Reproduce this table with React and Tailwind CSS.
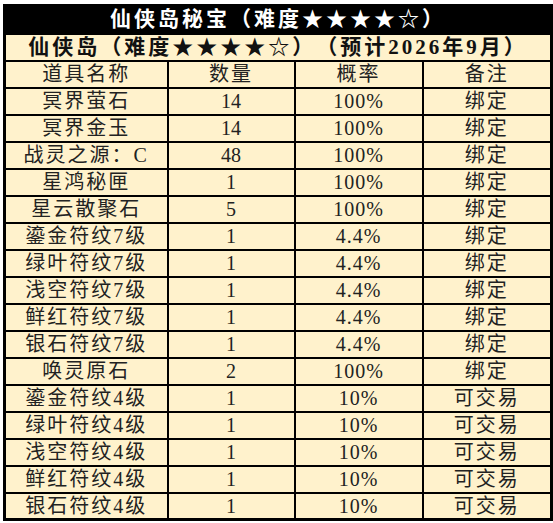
import React from "react";

const rows = [
  ["冥界萤石", "14", "100%", "绑定"],
  ["冥界金玉", "14", "100%", "绑定"],
  ["战灵之源：C", "48", "100%", "绑定"],
  ["星鸿秘匣", "1", "100%", "绑定"],
  ["星云散聚石", "5", "100%", "绑定"],
  ["鎏金符纹7级", "1", "4.4%", "绑定"],
  ["绿叶符纹7级", "1", "4.4%", "绑定"],
  ["浅空符纹7级", "1", "4.4%", "绑定"],
  ["鲜红符纹7级", "1", "4.4%", "绑定"],
  ["银石符纹7级", "1", "4.4%", "绑定"],
  ["唤灵原石", "2", "100%", "绑定"],
  ["鎏金符纹4级", "1", "10%", "可交易"],
  ["绿叶符纹4级", "1", "10%", "可交易"],
  ["浅空符纹4级", "1", "10%", "可交易"],
  ["鲜红符纹4级", "1", "10%", "可交易"],
  ["银石符纹4级", "1", "10%", "可交易"],
];

const font = { fontFamily: '"Liberation Serif", "Noto Sans CJK SC", serif' };

export default function App() {
  return (
    <div className="w-[553px] h-[523px] bg-white pt-[4px] pl-[3px] [text-spacing-trim:space-all]" style={font}>
      <table className="border-collapse border-[3px] border-black bg-[#fff2cc] text-[#222] table-fixed w-[547px]">
        <colgroup>
          <col className="w-[163px]" />
          <col className="w-[127px]" />
          <col className="w-[128px]" />
          <col className="w-[129px]" />
        </colgroup>
        <tbody>
          <tr className="h-[28px] bg-black">
            <td colSpan={4} className="text-center text-white font-bold text-[21px] leading-none tracking-[3px] p-0 border-2 border-black">
              仙侠岛秘宝（难度★★★★☆）
            </td>
          </tr>
          <tr className="h-[27px]">
            <td colSpan={4} className="text-center font-bold text-[21px] leading-none tracking-[3px] p-0 border-2 border-black text-[#111]">
              仙侠岛（难度★★★★☆）（预计2026年9月）
            </td>
          </tr>
          <tr className="h-[27px]">
            {["道具名称", "数量", "概率", "备注"].map((h) => (
              <td key={h} className="text-center text-[20px] leading-none tracking-[2px] p-0 border-2 border-black">
                {h}
              </td>
            ))}
          </tr>
          {rows.map((r, i) => (
            <tr key={i} className="h-[27px]">
              <td className="text-center text-[20px] leading-none tracking-[2px] p-0 border-2 border-black whitespace-nowrap">{r[0]}</td>
              <td className="text-center text-[20px] leading-none p-0 border-2 border-black">{r[1]}</td>
              <td className="text-center text-[20px] leading-none tracking-[1px] p-0 border-2 border-black">{r[2]}</td>
              <td className="text-center text-[20px] leading-none tracking-[2px] p-0 border-2 border-black">{r[3]}</td>
            </tr>
          ))}
        </tbody>
      </table>
    </div>
  );
}
